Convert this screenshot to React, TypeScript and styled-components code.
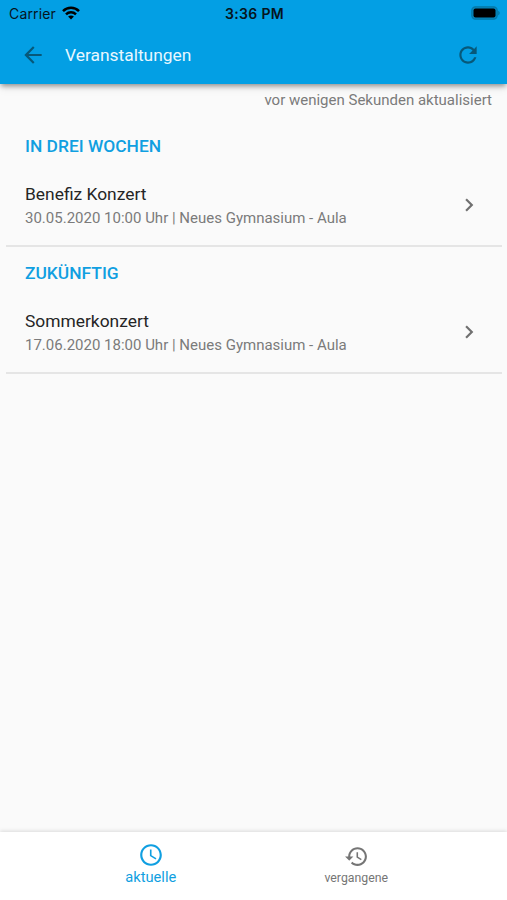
import React from "react";
import styled, { createGlobalStyle } from "styled-components";

const Global = createGlobalStyle`
  * { box-sizing: border-box; }
  body { margin: 0; background: #fafafa; font-family: Roboto, "Liberation Sans", sans-serif; }
`;

const Screen = styled.div`
  width: 507px;
  height: 900px;
  display: flex;
  flex-direction: column;
  overflow: hidden;
  background: #fafafa;
`;

const Header = styled.header`
  flex: none;
  height: 84px;
  background: #039fe4;
  box-shadow: 0 3px 5px -1px rgba(0, 0, 0, 0.4), 0 5px 9px rgba(0, 0, 0, 0.06);
`;

const StatusBar = styled.div`
  height: 27px;
  padding: 0 7px 0 9px;
  display: grid;
  grid-template-columns: 1fr auto 1fr;
  align-items: center;
  color: #06151d;
  font-family: Inter, "Liberation Sans", sans-serif;
  font-size: 14px;
  line-height: 27px;
`;

const Carrier = styled.div`
  display: flex;
  align-items: center;
  gap: 6px;
  letter-spacing: 0.16px;

  svg {
    margin-bottom: 2px;
  }
`;

const Time = styled.div`
  font-weight: 600;
  letter-spacing: 0.35px;
`;

const Battery = styled.svg`
  justify-self: end;
  margin-bottom: 1px;
`;

const Toolbar = styled.div`
  height: 56px;
  padding: 0 26px 0 20px;
  display: flex;
  align-items: center;
`;

const Title = styled.h1`
  flex: 1;
  margin: 0 0 0 19px;
  color: #e8f7ff;
  font-size: 17.4px;
  font-weight: 400;
  line-height: 24px;
`;

const Content = styled.main`
  flex: 1;
  padding: 0 5px 0 6px;
`;

const Updated = styled.div`
  height: 36px;
  padding: 6px 10px 0 0;
  color: #7b7b7b;
  font-size: 15px;
  line-height: 21px;
  text-align: right;
`;

const Section = styled.section`
  height: 127px;
  border-bottom: 2px solid #e5e5e5;
  padding: 0 20px 0 19px;
`;

const SectionTitle = styled.h2`
  height: 53px;
  margin: 0;
  color: #109fe1;
  font-size: 17.4px;
  font-weight: 500;
  line-height: 53px;
  text-transform: uppercase;
`;

const EventRow = styled.div`
  display: flex;
  align-items: center;
  height: 64px;
`;

const EventText = styled.div`
  flex: 1;
  padding-top: 2px;
`;

const EventName = styled.div`
  color: #252525;
  font-size: 17.4px;
  line-height: 24px;
`;

const EventDetail = styled.div`
  color: #7b7b7b;
  font-size: 15px;
  line-height: 24px;
`;

const Tabs = styled.nav`
  flex: none;
  height: 68px;
  padding: 0 48px;
  display: grid;
  grid-template-columns: 1fr 1fr;
  background: #fff;
  box-shadow: 0 -1px 4px rgba(0, 0, 0, 0.13);
`;

const Tab = styled.div<{ $active?: boolean }>`
  padding-top: ${(p) => (p.$active ? 10 : 12)}px;
  display: flex;
  flex-direction: column;
  align-items: center;
  color: ${(p) => (p.$active ? "#109fe1" : "#757575")};
  font-size: ${(p) => (p.$active ? 14.7 : 12.3)}px;
  line-height: 19px;
`;

const Glyph = styled.svg<{ $color?: string }>`
  flex: none;
  display: block;
  fill: ${(p) => p.$color ?? "currentColor"};
`;

const paths = {
  back: "M20 11H7.83l5.59-5.59L12 4l-8 8 8 8 1.41-1.41L7.83 13H20v-2z",
  refresh:
    "M17.65 6.35C16.2 4.9 14.21 4 12 4c-4.42 0-7.99 3.58-7.99 8s3.57 8 7.99 8c3.73 0 6.84-2.55 7.73-6h-2.08c-.82 2.33-3.04 4-5.65 4-3.31 0-6-2.69-6-6s2.69-6 6-6c1.66 0 3.14.69 4.22 1.78L13 11h7V4l-2.35 2.35z",
  chevron: "M10 6L8.59 7.41 13.17 12l-4.58 4.59L10 18l6-6z",
  clock:
    "M11.99 2C6.47 2 2 6.48 2 12s4.47 10 9.99 10C17.52 22 22 17.52 22 12S17.52 2 11.99 2zM12 20c-4.42 0-8-3.58-8-8s3.58-8 8-8 8 3.58 8 8-3.58 8-8 8zm.5-13H11v6l5.25 3.15.75-1.23-4.5-2.67z",
  history:
    "M13 3c-4.97 0-9 4.03-9 9H1l3.89 3.89.07.14L9 12H6c0-3.87 3.13-7 7-7s7 3.13 7 7-3.13 7-7 7c-1.93 0-3.68-.79-4.94-2.06l-1.42 1.42C8.27 19.99 10.51 21 13 21c4.97 0 9-4.03 9-9s-4.03-9-9-9zm-1 5v5l4.28 2.54.72-1.21-3.5-2.08V8H12z",
};

function Icon({ name, color, size = 26 }: { name: keyof typeof paths; color?: string; size?: number }) {
  return (
    <Glyph width={size} height={size} viewBox="0 0 24 24" $color={color}>
      <path d={paths[name]} />
    </Glyph>
  );
}

function Wifi() {
  return (
    <svg width="18" height="14" viewBox="0 0 18 14" fill="none" stroke="#000" strokeWidth="2.5">
      <path d="M1 5.2C5.5 .7 12.5 .7 17 5.2" />
      <path d="M4 8.3C6.8 5.5 11.2 5.5 14 8.3" />
      <path d="M9 13.6L6.1 10.6C7.7 9 10.3 9 11.9 10.6Z" fill="#000" stroke="none" />
    </svg>
  );
}

const events = [
  { group: "In drei Wochen", name: "Benefiz Konzert", detail: "30.05.2020 10:00 Uhr | Neues Gymnasium - Aula" },
  { group: "Zukünftig", name: "Sommerkonzert", detail: "17.06.2020 18:00 Uhr | Neues Gymnasium - Aula" },
];

export default function App() {
  return (
    <Screen>
      <Global />
      <Header>
        <StatusBar>
          <Carrier>
            Carrier
            <Wifi />
          </Carrier>
          <Time>3:36 PM</Time>
          <Battery width="29" height="14" viewBox="0 0 29 14">
            <rect x="0.8" y="0.8" width="25.4" height="12.4" rx="3.6" fill="#0486be" stroke="#0578a6" strokeWidth="1.2" />
            <rect x="2.5" y="2.6" width="22" height="8.8" rx="2" fill="#000" />
            <path d="M27.2 4.7c2 .8 2 3.8 0 4.6z" fill="#0578a6" />
          </Battery>
        </StatusBar>
        <Toolbar>
          <Icon name="back" color="#075879" />
          <Title>Veranstaltungen</Title>
          <Icon name="refresh" color="#075879" />
        </Toolbar>
      </Header>
      <Content>
        <Updated>vor wenigen Sekunden aktualisiert</Updated>
        {events.map((event) => (
          <Section key={event.name}>
            <SectionTitle>{event.group}</SectionTitle>
            <EventRow>
              <EventText>
                <EventName>{event.name}</EventName>
                <EventDetail>{event.detail}</EventDetail>
              </EventText>
              <Icon name="chevron" color="#707070" />
            </EventRow>
          </Section>
        ))}
      </Content>
      <Tabs>
        <Tab $active>
          <Icon name="clock" />
          aktuelle
        </Tab>
        <Tab>
          <Icon name="history" size={25} />
          vergangene
        </Tab>
      </Tabs>
    </Screen>
  );
}
